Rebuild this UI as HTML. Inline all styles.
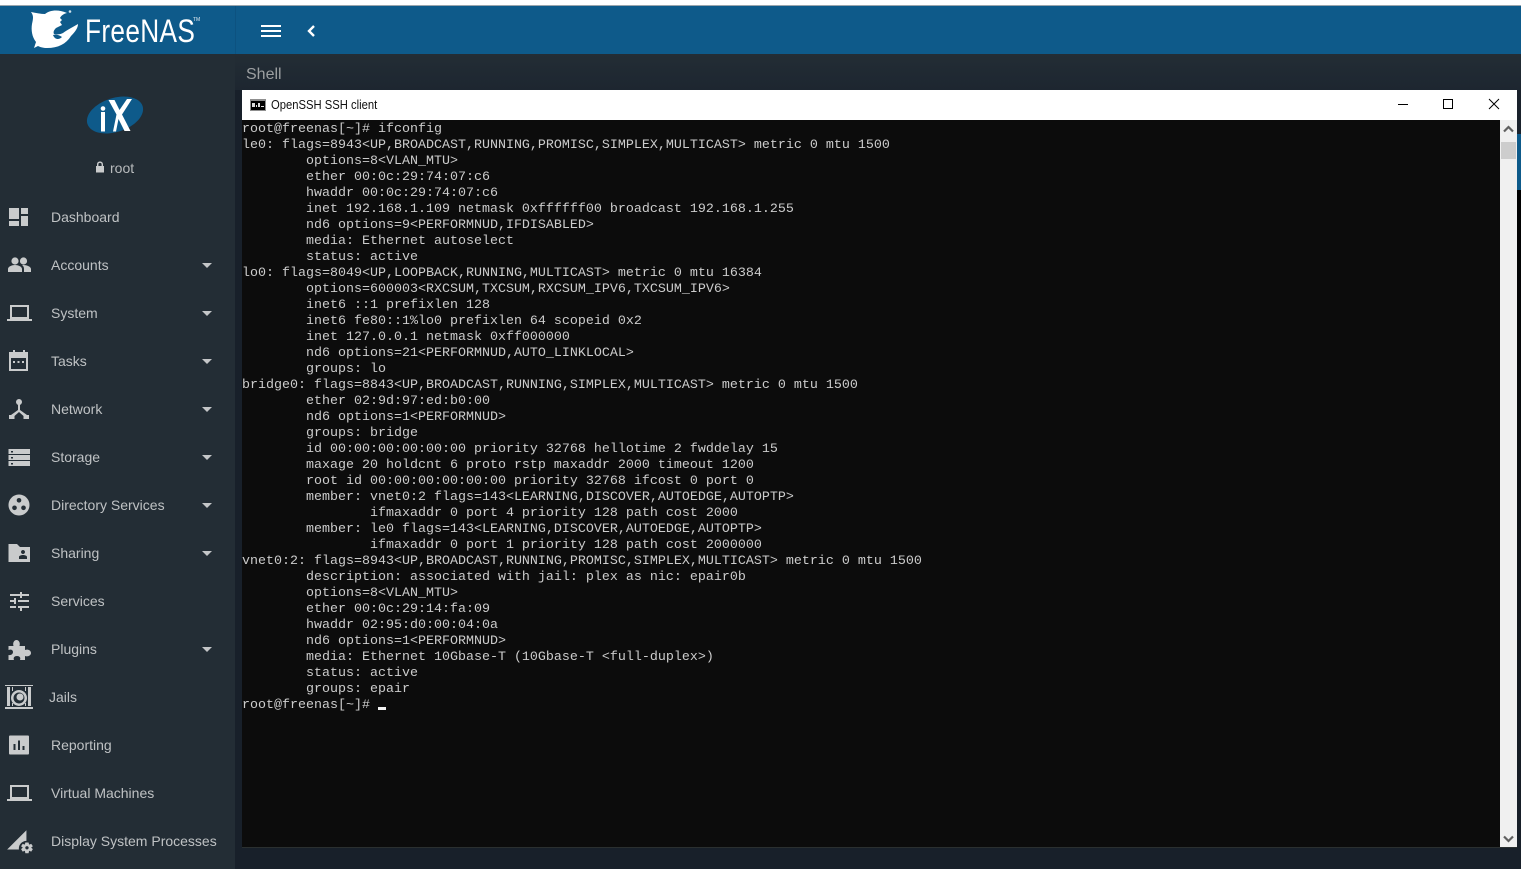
<!DOCTYPE html>
<html>
<head>
<meta charset="utf-8">
<style>
html,body{margin:0;padding:0;width:1521px;height:869px;overflow:hidden;background:#18202a;font-family:"Liberation Sans",sans-serif}
.abs{position:absolute}
#top{left:0;top:0;width:1521px;height:5px;background:#fff}
#line{left:0;top:5px;width:1521px;height:1px;background:#9aa5ad}
#hdr{left:0;top:6px;width:1521px;height:48px;background:#0e5a8a}
#hsep{left:235px;top:6px;width:1px;height:48px;background:#0c5280}
#side{left:0;top:54px;width:235px;height:815px;background:#232d35}
#main{left:235px;top:54px;width:1286px;height:36px;background:linear-gradient(#232d35,#1d2630)}
#shell{left:246px;top:65px;font-size:16px;line-height:19px;color:#9c9fa1}
.item{position:absolute;left:51px;font-size:14px;line-height:18px;color:#bfc2c4;white-space:nowrap}
.car{position:absolute;left:202px;width:0;height:0;border-left:5px solid transparent;border-right:5px solid transparent;border-top:5px solid #c4c6c8}
.ic{position:absolute;left:5px;width:28px;height:28px;fill:#c9cbcc}
#tbar{left:242px;top:90px;width:1275px;height:30px;background:#fff}
#ttl{left:271px;top:98px;font-size:12.5px;line-height:15px;color:#111;transform-origin:0 0;transform:scaleX(.9);white-space:nowrap}
#term{left:242px;top:120px;width:1258px;height:727px;background:#0c0c0c}
#txt{position:absolute;left:0;top:2px;margin:0;font:13.33px/16px "Liberation Mono",monospace;color:#cccccc;white-space:pre}
#sb{left:1500px;top:120px;width:17px;height:727px;background:#f0f0f0}
#thumb{left:1501px;top:142px;width:15px;height:17px;background:#cdcdcd}
#termedge{left:242px;top:847px;width:1275px;height:1px;background:#2b3030}
#blue{left:1517px;top:134px;width:4px;height:56px;background:#0e5a8a}
#blk{left:1517px;top:190px;width:4px;height:658px;background:linear-gradient(#000 0,#0a0d10 40%,#18202a 100%)}
#rdark{left:1517px;top:90px;width:4px;height:44px;background:#1a222c}
</style>
</head>
<body>
<div class="abs" id="top"></div>
<div class="abs" id="line"></div>
<div class="abs" id="hdr"></div>
<div class="abs" id="hsep"></div>
<div class="abs" id="side"></div>
<div class="abs" id="main"></div>

<svg class="abs" style="left:25px;top:6px" width="60" height="48" viewBox="0 0 60 48">
<path fill="#fff" d="M6 6 C11 7 16 8 20 8 C25 4 33 3 42 7 C38 8 36 10 35 12 L37 14 L35 16 L37 19 L31 22 C29 24 28 26 29 28 C33 29 36 28 38 27 C42 24 48 21 53 18 C53 22 50 26 46 30 C41 38 33 42 22 42 C18 42 15 41 13 40 L9 42 L11 36 C7 31 6 24 7 18 C8 13 9 10 6 6 Z"/>
<path fill="#0e5a8a" d="M28 29 C31 28 34 29 37 31 C34 34 30 34 28 29 Z"/>
<circle cx="45" cy="5.500" r="1.300" fill="#cfe0ea"/>
</svg>
<div class="abs" style="left:85px;top:12px;font-size:32px;line-height:38px;color:#fff;letter-spacing:.4px;transform-origin:0 0;transform:scaleX(.82);white-space:nowrap">FreeNAS</div>
<div class="abs" style="left:193px;top:17px;font-size:5px;line-height:6px;color:#dfe9f0">TM</div>

<svg class="abs" style="left:261px;top:25px" width="20" height="12"><rect x="0" y="0" width="20" height="2" fill="#fff"/><rect x="0" y="5" width="20" height="2" fill="#fff"/><rect x="0" y="10" width="20" height="2" fill="#fff"/></svg>
<svg class="abs" style="left:305px;top:24px" width="12" height="14"><path d="M9 2 L4 7 L9 12" fill="none" stroke="#fff" stroke-width="2.4"/></svg>

<svg class="abs" style="left:80px;top:90px" width="70" height="55" viewBox="0 0 70 55">
<ellipse cx="35" cy="25" rx="29" ry="17" transform="rotate(-18 35 25)" fill="#0e5a8a"/>
<rect x="21" y="22" width="4" height="19.500" fill="#fff"/>
<circle cx="23" cy="18.500" r="2.300" fill="#fff"/>
<path fill="#fff" d="M28.500 10 H34.500 L39.500 20 L47 9 H52 L42 24.500 L50.500 41 H44.500 L38.500 29 L36 41.500 H33 L36.500 24.500 Z"/>
</svg>
<svg class="abs" style="left:95px;top:161px" width="10" height="12" viewBox="0 0 10 12"><path fill="#c9cbcc" d="M1 5 H2 V3.5 C2 1.5 3.3 .5 5 .5 C6.7 .5 8 1.5 8 3.5 V5 H9 V11.5 H1 Z M3.4 5 H6.6 V3.5 C6.6 2.5 6 1.9 5 1.9 C4 1.9 3.4 2.5 3.4 3.5 Z"/></svg>
<div class="abs" style="left:110px;top:159px;font-size:14px;line-height:18px;color:#b8bbbd">root</div>

<svg class="ic" style="top:203px" viewBox="0 0 28 28"><path d="M4 5 H14 V16 H4 Z M16 5 H23 V11 H16 Z M4 18 H14 V23 H4 Z M16 13 H23 V23 H16 Z"/></svg>
<div class="item" style="top:208px">Dashboard</div>

<svg class="ic" style="top:251px" viewBox="0 0 28 28"><circle cx="10" cy="10" r="3.600"/><circle cx="18.500" cy="10" r="3.600"/><path d="M3 21 V18 C3 15.500 7 14 10 14 C13 14 17 15.500 17 18 V21 Z M18.500 14 C21.500 14 26 15.500 26 18 V21 H19 V18 C19 16.500 18.500 15 17 14.300 Z"/></svg>
<div class="item" style="top:256px">Accounts</div><div class="car" style="top:263px"></div>

<svg class="ic" style="top:299px" viewBox="0 0 28 28"><path d="M5 6 H24 V20 H5 Z M7 8 V18 H22 V8 Z M2 20 H27 V22 H2 Z" fill-rule="evenodd"/></svg>
<div class="item" style="top:304px">System</div><div class="car" style="top:311px"></div>

<svg class="ic" style="top:347px" viewBox="0 0 28 28"><path fill-rule="evenodd" d="M6 5 H8 V3 H10 V5 H18 V3 H20 V5 H23 V24 H4 V5 Z M6 11 V22 H21 V11 Z M8 14 H10 V16 H8 Z M12.500 14 H14.500 V16 H12.500 Z M17 14 H19 V16 H17 Z"/></svg>
<div class="item" style="top:352px">Tasks</div><div class="car" style="top:359px"></div>

<svg class="ic" style="top:395px" viewBox="0 0 28 28"><circle cx="14" cy="7" r="3"/><path d="M13 9 H15 V15 L22 20 H24 V24 H18.500 V21 L14 17 L9.500 21 V24 H4 V20 H6 L13 15 Z"/></svg>
<div class="item" style="top:400px">Network</div><div class="car" style="top:407px"></div>

<svg class="ic" style="top:443px" viewBox="0 0 28 28"><path fill-rule="evenodd" d="M3.500 6 H25 V11 H3.500 Z M6 8 V9.500 H8 V8 Z M3.500 12 H25 V17 H3.500 Z M6 14 V15.500 H8 V14 Z M3.500 18 H25 V23 H3.500 Z M6 20 V21.500 H8 V20 Z"/></svg>
<div class="item" style="top:448px">Storage</div><div class="car" style="top:455px"></div>

<svg class="ic" style="top:491px" viewBox="0 0 28 28"><path fill-rule="evenodd" d="M14 3.500 A10.500 10.500 0 1 1 13.990 3.500 Z M14 7 A2.300 2.300 0 1 0 14.010 7 Z M9.500 14.500 A2.300 2.300 0 1 0 9.510 14.500 Z M18.500 14.500 A2.300 2.300 0 1 0 18.510 14.500 Z"/></svg>
<div class="item" style="top:496px">Directory Services</div><div class="car" style="top:503px"></div>

<svg class="ic" style="top:539px" viewBox="0 0 28 28"><path fill-rule="evenodd" d="M3.500 5 H12 L15 8 H25 V23 H3.500 Z M18 11 A2 2 0 1 0 18.010 11 Z M14 18 V20 H22 V18 C22 16.500 19.500 16 18 16 C16.500 16 14 16.500 14 18 Z"/></svg>
<div class="item" style="top:544px">Sharing</div><div class="car" style="top:551px"></div>

<svg class="ic" style="top:587px" viewBox="0 0 28 28"><path d="M5 7 H15 V5 H17 V7 H24 V9 H17 V11 H15 V9 H5 Z M5 13 H9 V11 H11 V17 H9 V15 H5 Z M13 13 H24 V15 H13 Z M5 19 H11 V21 H5 Z M13 19 H24 V21 H17 V24 H15 V21 H13 Z"/></svg>
<div class="item" style="top:592px">Services</div>

<svg class="ic" style="top:635px" viewBox="0 0 28 28"><path d="M3.500 11 H8.500 C7.500 8 9 5 11.500 5 C14 5 15.500 8 14.500 11 H20 V15 C23 14 26 15.500 26 18 C26 20.500 23 22 20 21 V25 H15 C16 22.500 14.500 21 12 21 C9.500 21 8 22.500 9 25 H3.500 V20 C6 20.500 8 19 8 17 C8 15 6 14 3.500 15 Z"/></svg>
<div class="item" style="top:640px">Plugins</div><div class="car" style="top:647px"></div>

<svg class="abs" style="left:5px;top:685px" width="28" height="24" viewBox="0 0 28 24"><path fill="#c9cbcc" fill-rule="evenodd" d="M0 0 H28 V1 H0 Z M0 22 H28 V24 H0 Z M2 2 H5 V21 H2 Z M23 2 H26 V21 H23 Z M14 5 A8 8 0 1 0 14.010 5 Z M14 7.500 A5.500 5.500 0 1 1 13.990 7.500 Z M7 2 H8 V6 H7 Z M20 2 H21 V6 H20 Z M7 17 H8 V21 H7 Z M20 17 H21 V21 H20 Z"/><circle cx="15" cy="12" r="3.500" fill="#c9cbcc"/></svg>
<div class="item" style="top:688px;left:49px">Jails</div>

<svg class="ic" style="top:731px" viewBox="0 0 28 28"><path fill-rule="evenodd" d="M5 4.500 H23 Q24 4.500 24 5.500 V22.500 Q24 23.500 23 23.500 H5 Q4 23.500 4 22.500 V5.500 Q4 4.500 5 4.500 Z M8.500 13 V19 H10.500 V13 Z M13 9.500 V19 H15 V9.500 Z M17.500 15 V19 H19.500 V15 Z"/></svg>
<div class="item" style="top:736px">Reporting</div>

<svg class="ic" style="top:779px" viewBox="0 0 28 28"><path d="M5 6 H24 V20 H5 Z M7 8 V18 H22 V8 Z M2 20 H27 V22 H2 Z" fill-rule="evenodd"/></svg>
<div class="item" style="top:784px">Virtual Machines</div>

<svg class="ic" style="top:827px;height:30px;width:30px" viewBox="0 0 28 28"><path d="M2 21 L20 3 V13 A7 7 0 0 0 13 21 Z"/><path fill-rule="evenodd" d="M19 14.500 H22 L22.500 16.500 L24.500 15.700 L26 18 L24.400 19.300 L26 20.700 L24.500 23 L22.500 22.200 L22 24.500 H19 L18.500 22.200 L16.500 23 L15 20.700 L16.600 19.300 L15 18 L16.500 15.700 L18.500 16.500 Z M20.500 17.800 A1.600 1.600 0 1 0 20.510 17.800 Z"/></svg>
<div class="item" style="top:832px">Display System Processes</div>

<div class="abs" id="shell">Shell</div>

<div class="abs" id="rdark"></div>
<div class="abs" id="blue"></div>
<div class="abs" id="blk"></div>
<div class="abs" id="tbar"></div>
<svg class="abs" style="left:250px;top:99px" width="16" height="12"><rect width="16" height="12" fill="#8f8f8f"/><rect x="1" y="2" width="14" height="9" fill="#000"/><rect x="2" y="4" width="3" height="4" fill="#ddd"/><rect x="6" y="6" width="1" height="2" fill="#ddd"/><rect x="8" y="4" width="2" height="4" fill="#ddd"/><rect x="11" y="7" width="3" height="1" fill="#ddd"/></svg>
<div class="abs" id="ttl">OpenSSH SSH client</div>
<svg class="abs" style="left:1398px;top:98px" width="102" height="13"><rect x="0" y="6" width="10" height="1" fill="#000"/><rect x="45.500" y="1.500" width="9" height="9" fill="none" stroke="#000"/><path d="M91 1 L101 11 M101 1 L91 11" stroke="#000" fill="none"/></svg>

<div class="abs" id="term"><pre id="txt">root@freenas[~]# ifconfig
le0: flags=8943&lt;UP,BROADCAST,RUNNING,PROMISC,SIMPLEX,MULTICAST&gt; metric 0 mtu 1500
        options=8&lt;VLAN_MTU&gt;
        ether 00:0c:29:74:07:c6
        hwaddr 00:0c:29:74:07:c6
        inet 192.168.1.109 netmask 0xffffff00 broadcast 192.168.1.255
        nd6 options=9&lt;PERFORMNUD,IFDISABLED&gt;
        media: Ethernet autoselect
        status: active
lo0: flags=8049&lt;UP,LOOPBACK,RUNNING,MULTICAST&gt; metric 0 mtu 16384
        options=600003&lt;RXCSUM,TXCSUM,RXCSUM_IPV6,TXCSUM_IPV6&gt;
        inet6 ::1 prefixlen 128
        inet6 fe80::1%lo0 prefixlen 64 scopeid 0x2
        inet 127.0.0.1 netmask 0xff000000
        nd6 options=21&lt;PERFORMNUD,AUTO_LINKLOCAL&gt;
        groups: lo
bridge0: flags=8843&lt;UP,BROADCAST,RUNNING,SIMPLEX,MULTICAST&gt; metric 0 mtu 1500
        ether 02:9d:97:ed:b0:00
        nd6 options=1&lt;PERFORMNUD&gt;
        groups: bridge
        id 00:00:00:00:00:00 priority 32768 hellotime 2 fwddelay 15
        maxage 20 holdcnt 6 proto rstp maxaddr 2000 timeout 1200
        root id 00:00:00:00:00:00 priority 32768 ifcost 0 port 0
        member: vnet0:2 flags=143&lt;LEARNING,DISCOVER,AUTOEDGE,AUTOPTP&gt;
                ifmaxaddr 0 port 4 priority 128 path cost 2000
        member: le0 flags=143&lt;LEARNING,DISCOVER,AUTOEDGE,AUTOPTP&gt;
                ifmaxaddr 0 port 1 priority 128 path cost 2000000
vnet0:2: flags=8943&lt;UP,BROADCAST,RUNNING,PROMISC,SIMPLEX,MULTICAST&gt; metric 0 mtu 1500
        description: associated with jail: plex as nic: epair0b
        options=8&lt;VLAN_MTU&gt;
        ether 00:0c:29:14:fa:09
        hwaddr 02:95:d0:00:04:0a
        nd6 options=1&lt;PERFORMNUD&gt;
        media: Ethernet 10Gbase-T (10Gbase-T &lt;full-duplex&gt;)
        status: active
        groups: epair
root@freenas[~]# </pre>
<div class="abs" style="left:136px;top:587px;width:8px;height:3px;background:#f2f2f2"></div>
</div>
<div class="abs" id="sb"></div>
<div class="abs" id="thumb"></div>
<svg class="abs" style="left:1503px;top:125px" width="11" height="8"><path d="M1 6.500 L5.500 2 L10 6.500" fill="none" stroke="#606060" stroke-width="2.200"/></svg>
<svg class="abs" style="left:1503px;top:835px" width="11" height="8"><path d="M1 1.500 L5.500 6 L10 1.500" fill="none" stroke="#606060" stroke-width="2.200"/></svg>
<div class="abs" id="termedge"></div>
</body>
</html>
